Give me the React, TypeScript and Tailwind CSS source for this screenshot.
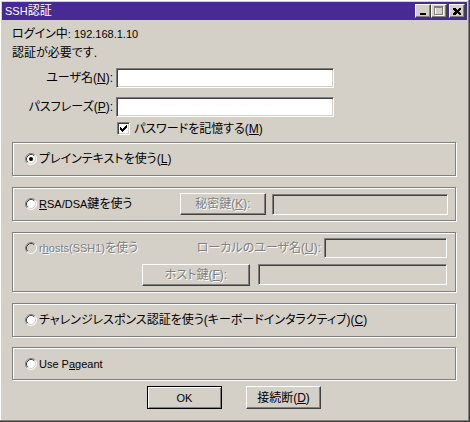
import React from "react";

const sunken =
  "border border-t-[#808080] border-l-[#808080] border-b-white border-r-white shadow-[inset_1px_1px_0_#404040,inset_-1px_-1px_0_#d4d0c8]";
const raised =
  "border border-t-white border-l-white border-b-[#404040] border-r-[#404040] shadow-[inset_-1px_-1px_0_#808080] bg-[#d4d0c8]";
const etched = "border border-[#808080] shadow-[inset_1px_1px_0_#fff,1px_1px_0_#fff]";
const dis = "text-[#808080] [text-shadow:1px_1px_0_#fff]";

function L({ children }: { children: React.ReactNode }) {
  return <span className="text-[11px]">{children}</span>;
}

function Radio({ checked, disabled }: { checked?: boolean; disabled?: boolean }) {
  return (
    <svg width="12" height="12" viewBox="0 0 12 12" className="shrink-0">
      <circle cx="6" cy="6" r="5" fill={disabled ? "#d4d0c8" : "#ffffff"} />
      <path d="M2.11 9.89 A5.5 5.5 0 0 1 9.89 2.11" stroke="#808080" fill="none" />
      <path d="M9.89 2.11 A5.5 5.5 0 0 1 2.11 9.89" stroke="#ffffff" fill="none" />
      <path d="M2.82 9.18 A4.5 4.5 0 0 1 9.18 2.82" stroke="#404040" fill="none" />
      <path d="M9.18 2.82 A4.5 4.5 0 0 1 2.82 9.18" stroke="#d4d0c8" fill="none" />
      {checked && <circle cx="6" cy="6" r="2" fill="#000" />}
    </svg>
  );
}

function Check() {
  const px: [number, number, number][] = [
    [6, 0, 1],
    [5, 1, 2],
    [0, 2, 1],
    [4, 2, 3],
    [0, 3, 2],
    [3, 3, 3],
    [0, 4, 5],
    [1, 5, 3],
    [2, 6, 1],
  ];
  return (
    <span className={`${sunken} w-[13px] h-[13px] bg-white flex items-center justify-center shrink-0`}>
      <svg width="7" height="7" viewBox="0 0 7 7" shapeRendering="crispEdges">
        {px.map(([x, y, w], i) => (
          <rect key={i} x={x} y={y} width={w} height={1} fill="#000" />
        ))}
      </svg>
    </span>
  );
}

function CapBtn({ children }: { children: React.ReactNode }) {
  return (
    <div className={`${raised} w-[16px] h-[14px] flex items-center justify-center`}>{children}</div>
  );
}

export default function App() {
  return (
    <div className="w-[470px] h-[422px] bg-[#d4d0c8] flex flex-col font-['Liberation_Sans','Noto_Sans_CJK_JP',sans-serif] text-[12px] leading-[14px] text-black [font-feature-settings:'palt'] shadow-[inset_-1px_-1px_0_#404040,inset_-2px_-2px_0_#808080,inset_1px_1px_0_#fff] overflow-hidden">
      {/* caption */}
      <div className="mt-[2px] ml-[2px] mr-[3px] h-[18px] bg-[#472a93] flex items-center pl-[3px] pr-[2px]">
        <span className="text-white">
          <L>SSH</L>認証
        </span>
        <div className="ml-auto flex items-center">
          <CapBtn>
            <svg width="8" height="7" viewBox="0 0 8 7" shapeRendering="crispEdges">
              <rect x="1" y="5" width="6" height="2" fill="#000" />
            </svg>
          </CapBtn>
          <CapBtn>
            <svg width="10" height="10" viewBox="0 0 10 10" shapeRendering="crispEdges">
              <rect x="1.5" y="1.5" width="8" height="8" fill="none" stroke="#fff" />
              <rect x="0.5" y="0.5" width="8" height="8" fill="none" stroke="#808080" />
              <rect x="1" y="1" width="8" height="1" fill="#808080" />
            </svg>
          </CapBtn>
          <div className="w-[2px]" />
          <CapBtn>
            <svg width="8" height="7" viewBox="0 0 8 7" shapeRendering="crispEdges">
              <path d="M0 0h2l2 2 2-2h2v1l-2 2.5 2 2.5v1h-2l-2-2-2 2h-2v-1l2-2.5-2-2.5z" fill="#000" />
            </svg>
          </CapBtn>
        </div>
      </div>

      {/* content */}
      <div className="flex flex-col pl-[12px] pr-[14px]">
        <div className="mt-[7px]">
          ログイン中<L>: 192.168.1.10</L>
        </div>
        <div className="mt-[5px]">認証が必要です.</div>

        <div className="mt-[8px] flex items-center h-[20px]">
          <span className="w-[101px] text-right">
            ユーザ名(<u>N</u>):
          </span>
          <div className={`${sunken} ml-[3px] w-[218px] h-[20px] bg-white`} />
        </div>
        <div className="mt-[9px] flex items-center h-[20px]">
          <span className="w-[101px] text-right">
            パスフレーズ(<u>P</u>):
          </span>
          <div className={`${sunken} ml-[3px] w-[218px] h-[20px] bg-white`} />
        </div>
        <div className="mt-[5px] flex items-center h-[13px] pl-[105px] gap-[4px]">
          <Check />
          <span>
            パスワードを記憶する(<u>M</u>)
          </span>
        </div>

        {/* group 1 */}
        <div className={`${etched} mt-[7px] h-[34px] flex items-center pl-[12px] gap-[2px]`}>
          <Radio checked />
          <span>
            プレインテキストを使う(<u>L</u>)
          </span>
        </div>

        {/* group 2 */}
        <div className={`${etched} mt-[11px] h-[34px] flex items-center pl-[12px]`}>
          <div className="w-[155px] flex items-center gap-[2px]">
            <Radio />
            <span>
              <L>
                <u>R</u>SA/DSA
              </L>
              鍵を使う
            </span>
          </div>
          <div className={`${raised} w-[86px] h-[22px] flex items-center justify-center ${dis}`}>
            <span>
              秘密鍵(<u>K</u>):
            </span>
          </div>
          <div className={`${sunken} ml-[6px] w-[176px] h-[21px] bg-[#d4d0c8]`} />
        </div>

        {/* group 3 */}
        <div className={`${etched} mt-[11px] h-[60px] flex flex-col pt-[5px]`}>
          <div className="flex items-center h-[20px] pl-[12px] pr-[8px]">
            <Radio disabled />
            <span className={`ml-[2px] ${dis}`}>
              <L>
                r<u>h</u>osts(SSH1)
              </L>
              を使う
            </span>
            <span className={`ml-auto ${dis}`}>
              ローカルのユーザ名(<u>U</u>):
            </span>
            <div className={`${sunken} ml-[3px] w-[123px] h-[20px] bg-[#d4d0c8]`} />
          </div>
          <div className="mt-[6px] flex items-start pl-[129px]">
            <div className={`${raised} w-[108px] h-[22px] flex items-center justify-center ${dis}`}>
              <span>
                ホスト鍵(<u>F</u>):
              </span>
            </div>
            <div className={`${sunken} ml-[8px] w-[189px] h-[21px] bg-[#d4d0c8]`} />
          </div>
        </div>

        {/* group 4 */}
        <div className={`${etched} mt-[11px] h-[34px] flex items-center pl-[12px] gap-[2px]`}>
          <Radio />
          <span>
            チャレンジレスポンス認証を使う(キーボードインタラクティブ)(<u>C</u>)
          </span>
        </div>

        {/* group 5 */}
        <div className={`${etched} mt-[10px] h-[33px] flex items-center pl-[12px] gap-[2px]`}>
          <Radio />
          <L>
            Use P<u>a</u>geant
          </L>
        </div>

        {/* buttons */}
        <div className="mt-[6px] flex pl-[135px] gap-[24px]">
          <div className="w-[75px] h-[23px] border border-black shadow-[inset_1px_1px_0_#fff,inset_-1px_-1px_0_#808080] flex items-center justify-center">
            <L>OK</L>
          </div>
          <div className={`${raised} w-[75px] h-[23px] flex items-center justify-center`}>
            <span>
              接続断(<u>D</u>)
            </span>
          </div>
        </div>
      </div>
    </div>
  );
}
